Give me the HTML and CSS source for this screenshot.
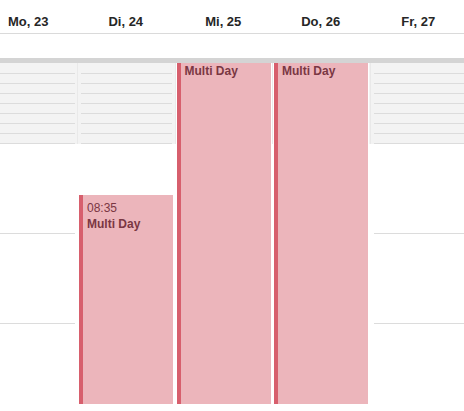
FILE: index.html
```html
<!DOCTYPE html>
<html lang="de">
<head>
<meta charset="utf-8">
<title>Woche</title>
<link rel="stylesheet" href="styles.css">
</head>
<body>
<div class="cal">
  <div class="head">
    <div class="day-name">Mo, 23</div>
    <div class="day-name">Di, 24</div>
    <div class="day-name">Mi, 25</div>
    <div class="day-name">Do, 26</div>
    <div class="day-name">Fr, 27</div>
  </div>
  <div class="allday"></div>
  <div class="bar"></div>
  <div class="grid">
    <div class="col">
      <div class="off"><div class="s"></div><div class="s"></div><div class="s"></div><div class="s"></div><div class="s"></div><div class="s"></div><div class="s"></div><div class="s"></div></div>
      <div class="hour"></div><div class="hour"></div><div class="hour"></div>
    </div>
    <div class="col">
      <div class="off"><div class="s"></div><div class="s"></div><div class="s"></div><div class="s"></div><div class="s"></div><div class="s"></div><div class="s"></div><div class="s"></div></div>
      <div class="hour"></div><div class="hour"></div><div class="hour"></div>
      <div class="event" style="top:132px">
        <div class="ev-time">08:35</div>
        <div class="ev-title">Multi Day</div>
      </div>
    </div>
    <div class="col">
      <div class="off"><div class="s"></div><div class="s"></div><div class="s"></div><div class="s"></div><div class="s"></div><div class="s"></div><div class="s"></div><div class="s"></div></div>
      <div class="hour"></div><div class="hour"></div><div class="hour"></div>
      <div class="event cont" style="top:0px">
        <div class="ev-title">Multi Day</div>
      </div>
    </div>
    <div class="col">
      <div class="off"><div class="s"></div><div class="s"></div><div class="s"></div><div class="s"></div><div class="s"></div><div class="s"></div><div class="s"></div><div class="s"></div></div>
      <div class="hour"></div><div class="hour"></div><div class="hour"></div>
      <div class="event cont" style="top:0px">
        <div class="ev-title">Multi Day</div>
      </div>
    </div>
    <div class="col">
      <div class="off"><div class="s"></div><div class="s"></div><div class="s"></div><div class="s"></div><div class="s"></div><div class="s"></div><div class="s"></div><div class="s"></div></div>
      <div class="hour"></div><div class="hour"></div><div class="hour"></div>
    </div>
  </div>
</div>
</body>
</html>
```
FILE: styles.css
```css
html, body {
  margin: 0;
  padding: 0;
  background: #ffffff;
}
body {
  width: 464px;
  height: 411px;
  overflow: hidden;
  font-family: "Liberation Sans", Arial, Helvetica, sans-serif;
}
.cal {
  margin-left: -20.5px;
  width: 487.5px;
}
.head {
  display: grid;
  grid-template-columns: repeat(5, 97.5px);
  height: 33px;
  border-bottom: 1px solid #dadada;
}
.day-name {
  text-align: center;
  font-size: 13px;
  font-weight: bold;
  line-height: 15px;
  padding-top: 14px;
  color: #262626;
}
.allday {
  height: 24px;
}
.bar {
  height: 5px;
  background: #d4d4d4;
}
.grid {
  display: grid;
  grid-template-columns: repeat(5, 97.5px);
  height: 348px;
  overflow: hidden;
}
.col {
  position: relative;
}
.off {
  background: #f3f3f3;
  border-left: 1px solid #e9e9e9;
  padding: 1px 2.5px 0 3px;
}
.col:first-child .off {
  border-left: none;
  padding-left: 4px;
}
.s {
  height: 9px;
  border-bottom: 1px solid #dcdcdc;
}
.hour {
  height: 89px;
  margin: 0 2.5px 0 4px;
  border-bottom: 1px solid #dcdcdc;
}
.event {
  position: absolute;
  left: 2px;
  width: 90px;
  bottom: 10px;
  background: #ecb5bb;
  border-left: 4px solid #d75f6d;
  box-shadow: 0 0 0 1px #ffffff;
  padding: 5px 0 0 4px;
  box-sizing: border-box;
  width: 94px;
  color: #7a3743;
  font-size: 12px;
  line-height: 16px;
  overflow: hidden;
}
.event.cont {
  padding-top: 0;
  box-shadow: 1px 0 0 0 #ffffff, -1px 0 0 0 #ffffff;
}
.ev-time {
  font-weight: normal;
}
.ev-title {
  font-weight: bold;
}
```
